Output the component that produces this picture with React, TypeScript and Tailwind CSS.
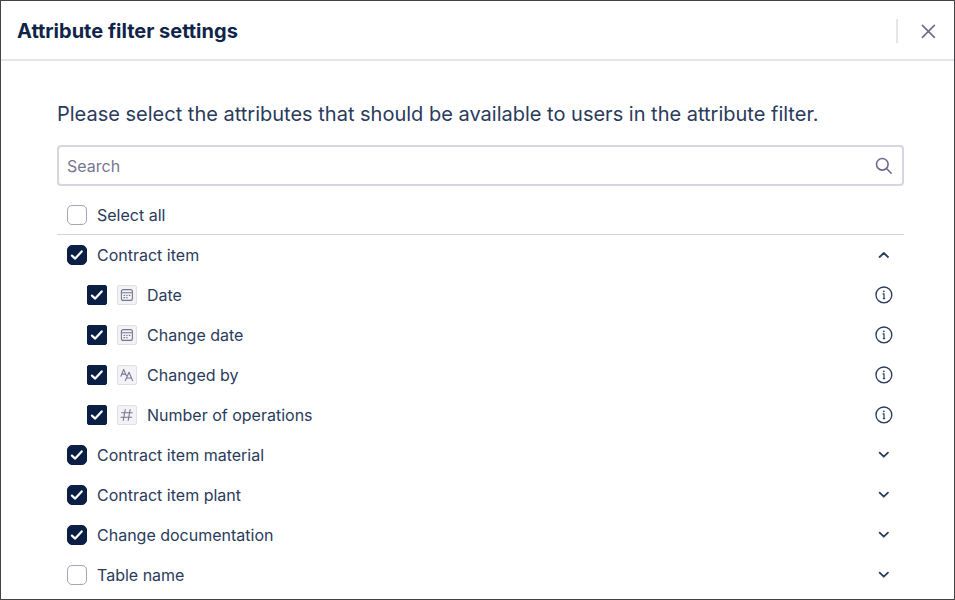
import React, { useState } from 'react';
import clsx from 'clsx';

type AttributeType = 'date' | 'text' | 'number';

interface Attribute {
  id: string;
  label: string;
  type: AttributeType;
}

interface Table {
  id: string;
  label: string;
  attributes: Attribute[];
}

const tables: Table[] = [
  {
    id: 'contract-item',
    label: 'Contract item',
    attributes: [
      { id: 'date', label: 'Date', type: 'date' },
      { id: 'change-date', label: 'Change date', type: 'date' },
      { id: 'changed-by', label: 'Changed by', type: 'text' },
      { id: 'operations', label: 'Number of operations', type: 'number' },
    ],
  },
  { id: 'contract-item-material', label: 'Contract item material', attributes: [] },
  { id: 'contract-item-plant', label: 'Contract item plant', attributes: [] },
  { id: 'change-documentation', label: 'Change documentation', attributes: [] },
  { id: 'table-name', label: 'Table name', attributes: [] },
];

const allIds = tables.flatMap((table) => [table.id, ...table.attributes.map((a) => a.id)]);

const CloseIcon = () => (
  <svg viewBox="0 0 20 20" className="size-5" fill="none" stroke="currentColor" strokeWidth="1.6" strokeLinecap="round">
    <path d="M4.4 4.4 16.4 16.4M16.4 4.4 4.4 16.4" />
  </svg>
);

const SearchIcon = () => (
  <svg viewBox="0 0 20 20" className="size-5 shrink-0 text-[#6b6b8c]" fill="none" stroke="currentColor" strokeWidth="1.6" strokeLinecap="round">
    <circle cx="8.3" cy="8.3" r="5.8" />
    <path d="M12.5 12.5 17.2 17.2" />
  </svg>
);

const InfoIcon = () => (
  <svg viewBox="0 0 20 20" className="size-5" fill="none" stroke="currentColor" strokeWidth="1.3" strokeLinecap="round">
    <circle cx="9.9" cy="9.9" r="7.9" />
    <path d="M9 8.8H10V13.6M9.3 13.6H10.7" strokeWidth="1.2" />
    <circle cx="9.9" cy="6.3" r="0.9" fill="currentColor" stroke="none" />
  </svg>
);

const ChevronIcon = ({ open }: { open: boolean }) => (
  <svg viewBox="0 0 20 20" className="size-5" fill="none" stroke="currentColor" strokeWidth="1.8" strokeLinecap="round" strokeLinejoin="round">
    <path d={open ? 'M5.6 12 9.8 8 14 12' : 'M5.6 7.6 9.8 11.6 14 7.6'} />
  </svg>
);

const TypeIcon = ({ type }: { type: AttributeType }) => (
  <span className="flex size-5 shrink-0 items-center justify-center rounded-xs border border-[#dedee8] bg-[#f2f2f7] text-[#77778f]">
    <svg viewBox="0 0 18 18" className="size-[18px] shrink-0" fill="none" stroke="currentColor" strokeLinecap="round" strokeLinejoin="round">
      {type === 'date' && (
        <>
          <rect x="3.4" y="3.6" width="11" height="10.8" rx="2" strokeWidth="1.1" />
          <path d="M3.4 6.8H14.4" strokeWidth="1.1" />
          <path d="M8.7 9.3H9.1M11.3 9.3H11.9M6 9.3H6.6M6 11.7H6.6M8.7 11.7H9.1" strokeWidth="1.2" />
        </>
      )}
      {type === 'text' && (
        <path d="M2.9 10.3 5.7 3.4 8.3 9.6M3.9 8.1H7.4M7.3 14.6 11 6.3 14.6 14.6M8.5 12H13.5" strokeWidth="1.1" />
      )}
      {type === 'number' && (
        <path d="M7.2 3.5 5.3 14.5M12.1 3.5 10.2 14.5M3.6 6.8H14.2M3 11.2H13.6" strokeWidth="1.1" />
      )}
    </svg>
  </span>
);

interface CheckboxProps {
  id: string;
  checked: boolean;
  onChange: () => void;
  square?: boolean;
}

const Checkbox: React.FC<CheckboxProps> = ({ id, checked, onChange, square }) => (
  <span className="grid size-5 shrink-0">
    <input
      id={id}
      type="checkbox"
      checked={checked}
      onChange={onChange}
      className={clsx(
        'col-start-1 row-start-1 size-5 cursor-pointer appearance-none border border-[#a5a3be] bg-white checked:border-[#0b1f45] checked:bg-[#0b1f45]',
        square ? 'rounded-xs' : 'rounded-[5px]'
      )}
    />
    {checked && (
      <svg viewBox="0 0 20 20" className="pointer-events-none col-start-1 row-start-1 size-5" fill="none" stroke="white" strokeWidth="2.2" strokeLinecap="round" strokeLinejoin="round">
        <path d="M4.9 10.6 8.2 13.6 14.7 6.4" />
      </svg>
    )}
  </span>
);

const App: React.FC = () => {
  const [selected, setSelected] = useState<string[]>(allIds.filter((id) => id !== 'table-name'));
  const [expanded, setExpanded] = useState<string[]>(['contract-item']);
  const [search, setSearch] = useState('');

  const allSelected = selected.length === allIds.length;

  const toggle = (list: string[], id: string) =>
    list.includes(id) ? list.filter((item) => item !== id) : [...list, id];

  const visibleTables = tables.filter((table) =>
    [table.label, ...table.attributes.map((a) => a.label)].some((label) =>
      label.toLowerCase().includes(search.toLowerCase())
    )
  );

  return (
    <div className="min-h-screen border border-[#444448] bg-white font-['Inter',sans-serif] text-base text-[#2a3b5c]">
      <header className="flex h-15 items-center justify-between border-b-2 border-[#e4e4ec] px-4 pt-0.5">
        <h1 className="text-xl font-bold text-[#10244a]">Attribute filter settings</h1>
        <div className="flex items-center gap-5">
          <span className="h-6 w-0.5 bg-[#e4e4ec]" />
          <button type="button" aria-label="Close" className="cursor-pointer text-[#6b6b8c]">
            <CloseIcon />
          </button>
        </div>
      </header>

      <main className="pt-10 pr-[50px] pl-14">
        <p className="whitespace-nowrap text-xl leading-[26px]">
          Please select the attributes that should be available to users in the attribute filter.
        </p>

        <div className="mt-[18px] flex h-[41px] items-center rounded-sm border-2 border-[#d6d6e0] px-2 focus-within:border-[#a5a3be]">
          <input
            type="text"
            aria-label="Search"
            placeholder="Search"
            value={search}
            onChange={(e) => setSearch(e.target.value)}
            className="min-w-0 flex-1 bg-transparent outline-none placeholder:text-[#77778f]"
          />
          <SearchIcon />
        </div>

        <div className="mt-2 flex h-10 items-center gap-2.5 px-2.5 pt-0.5">
          <Checkbox id="select-all" checked={allSelected} onChange={() => setSelected(allSelected ? [] : allIds)} />
          <label htmlFor="select-all">Select all</label>
        </div>

        <ul className="border-t border-[#d3d3de]">
          {visibleTables.map((table) => {
            const open = expanded.includes(table.id);
            return (
              <li key={table.id}>
                <div className="flex h-10 items-center gap-2.5 px-2.5">
                  <Checkbox
                    id={table.id}
                    checked={selected.includes(table.id)}
                    onChange={() => setSelected(toggle(selected, table.id))}
                  />
                  <label htmlFor={table.id} className="flex-1">{table.label}</label>
                  <button
                    type="button"
                    aria-label={`Toggle ${table.label}`}
                    aria-expanded={open}
                    onClick={() => setExpanded(toggle(expanded, table.id))}
                    className="cursor-pointer"
                  >
                    <ChevronIcon open={open} />
                  </button>
                </div>
                {open && (
                  <ul>
                    {table.attributes.map((attribute) => (
                      <li key={attribute.id} className="flex h-10 items-center gap-2.5 pr-2.5 pl-7.5">
                        <Checkbox
                          id={attribute.id}
                          square
                          checked={selected.includes(attribute.id)}
                          onChange={() => setSelected(toggle(selected, attribute.id))}
                        />
                        <TypeIcon type={attribute.type} />
                        <label htmlFor={attribute.id} className="flex-1">{attribute.label}</label>
                        <button type="button" aria-label={`About ${attribute.label}`} className="cursor-pointer">
                          <InfoIcon />
                        </button>
                      </li>
                    ))}
                  </ul>
                )}
              </li>
            );
          })}
        </ul>
      </main>
    </div>
  );
};

export default App;
